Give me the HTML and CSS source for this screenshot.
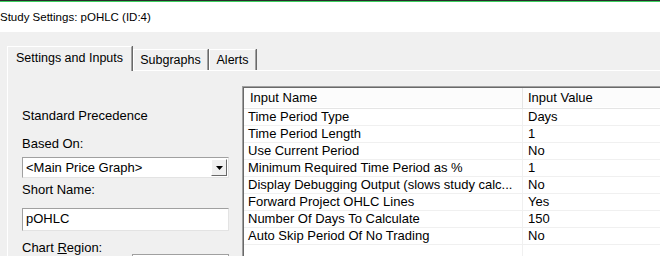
FILE: index.html
```html
<!DOCTYPE html>
<html>
<head>
<meta charset="utf-8">
<link rel="stylesheet" href="styles.css">
</head>
<body>
  <div class="top-strip"></div>
  <div class="title-bar">Study Settings: pOHLC (ID:4)</div>

  <div class="dialog">
    <div class="tabs">
      <div class="tab active">Settings and Inputs</div>
      <div class="tab subgraphs">Subgraphs</div>
      <div class="tab alerts">Alerts</div>
    </div>

    <div class="tab-panel">
      <div class="left-col">
        <div class="label precedence">Standard Precedence</div>
        <div class="label">Based On:</div>
        <div class="combo">
          <span class="combo-text">&lt;Main Price Graph&gt;</span>
          <span class="combo-btn">
            <svg width="7" height="4" viewBox="0 0 7 4"><path d="M0 0h7L3.5 4z" fill="#000"/></svg>
          </span>
        </div>
        <div class="label">Short Name:</div>
        <div class="textbox">pOHLC</div>
        <div class="region-row">
          <div class="label region-label">Chart <u>R</u>egion:</div>
          <div class="region-box"></div>
        </div>
      </div>

      <div class="inputs-table">
        <div class="row head">
          <div class="cell name">Input Name</div>
          <div class="cell value">Input Value</div>
        </div>
        <div class="row"><div class="cell name">Time Period Type</div><div class="cell value">Days</div></div>
        <div class="row"><div class="cell name">Time Period Length</div><div class="cell value">1</div></div>
        <div class="row"><div class="cell name">Use Current Period</div><div class="cell value">No</div></div>
        <div class="row"><div class="cell name">Minimum Required Time Period as %</div><div class="cell value">1</div></div>
        <div class="row"><div class="cell name">Display Debugging Output (slows study calc...</div><div class="cell value">No</div></div>
        <div class="row"><div class="cell name">Forward Project OHLC Lines</div><div class="cell value">Yes</div></div>
        <div class="row"><div class="cell name">Number Of Days To Calculate</div><div class="cell value">150</div></div>
        <div class="row"><div class="cell name">Auto Skip Period Of No Trading</div><div class="cell value">No</div></div>
        <div class="row empty"><div class="cell name"></div><div class="cell value"></div></div>
      </div>
    </div>
  </div>
</body>
</html>
```

FILE: styles.css
```css
body {
  margin: 0;
  width: 660px;
  height: 256px;
  overflow: hidden;
  background-color: #f0f0f0;
  font-family: "Liberation Sans", Arial, sans-serif;
  font-size: 12px;
  color: #000;
}

.top-strip {
  height: 1px;
  background-color: #2a2a2a;
  border-bottom: 1px solid #3ccf5e; /* window accent line */
}

.title-bar {
  height: 30px;
  line-height: 30px;
  background-color: #fff;
  font-size: 11.5px;
  white-space: nowrap;
}

.dialog {
  padding: 14px 0 0 7px;
}

/* tab strip */
.tabs {
  display: flex;
  align-items: flex-end;
  height: 24px;
  position: relative;
  z-index: 1;
  font-size: 12.5px;
}

.tab {
  height: 20px;
  line-height: 21px;
  box-sizing: content-box;
  text-align: center;
  border-top: 1px solid #fff;
  border-left: 1px solid #fff;
  border-right: 1px solid #a0a0a0;
  box-shadow: 1px 0 0 #696969;
  margin-right: 1px;
  background-color: #f0f0f0;
}

.tab.active {
  width: 123px;
  height: 24px;
  line-height: 22px;
  margin-bottom: -1px;
}

.tab.subgraphs {
  width: 73px;
}

.tab.alerts {
  width: 45px;
}

.tab-panel {
  display: flex;
  align-items: flex-start;
  border-top: 1px solid #fff;
  border-left: 1px solid #fff;
  height: 200px;
}

/* left column */
.left-col {
  width: 207px;
  padding: 38px 0 0 14px;
  display: flex;
  flex-direction: column;
  font-size: 13px;
}

.label {
  height: 14px;
  line-height: 14px;
  white-space: nowrap;
}

.precedence {
  margin-bottom: 14px;
}

.combo {
  margin-top: 6px;
  height: 21px;
  box-sizing: border-box;
  border: 1px solid #a0a0a0;
  border-right-color: #e3e3e3;
  border-bottom-color: #e3e3e3;
  background-color: #fff;
  display: flex;
  align-items: center;
  padding: 1px;
  margin-bottom: 5px;
}

.combo-text {
  flex: 1;
  padding-left: 2px;
}

.combo-btn {
  width: 16px;
  height: 17px;
  box-sizing: border-box;
  background-color: #f0f0f0;
  border: 1px solid #fff;
  border-right-color: #696969;
  border-bottom-color: #696969;
  display: flex;
  align-items: center;
  justify-content: center;
}

.textbox {
  margin-top: 11px;
  height: 23px;
  line-height: 20px;
  box-sizing: border-box;
  border: 1px solid #a0a0a0;
  border-right-color: #e3e3e3;
  border-bottom-color: #e3e3e3;
  background-color: #fff;
  padding-left: 3px;
  margin-bottom: 10px;
}

.region-row {
  display: flex;
  align-items: flex-start;
}

.region-label {
  width: 110px;
}

.region-box {
  margin-top: 13px;
  flex: 1;
  height: 20px;
  border: 1px solid #a0a0a0;
  background-color: #fff;
}

/* inputs list */
.inputs-table {
  margin-left: 13px;
  margin-top: 15px;
  flex: 1;
  height: 200px;
  background-color: #fff;
  border-top: 1px solid #a0a0a0;
  border-left: 1px solid #a0a0a0;
  box-shadow: inset 1px 1px 0 #696969;
  padding: 1px 0 0 1px;
  font-size: 13px;
}

.row {
  display: flex;
  height: 17px;
  box-sizing: border-box;
  border-bottom: 1px solid #f0f0f0;
  white-space: nowrap;
}

.row.head {
  height: 21px;
  background-color: #fcfcfc;
  border-bottom: 1px solid #e5e5e5;
  box-shadow: inset 0 -1px 0 #fff;
}

.row.empty {
  border-bottom: none;
}

.cell {
  line-height: 16px;
  overflow: hidden;
}

.cell.name {
  width: 279px;
  padding-left: 4px;
  box-sizing: border-box;
  border-right: 1px solid #f0f0f0;
}

.cell.value {
  flex: 1;
  padding-left: 5px;
}

.head .cell {
  line-height: 20px;
}

.head .cell.name {
  padding-left: 6px;
  border-right-color: #e5e5e5;
}
```
